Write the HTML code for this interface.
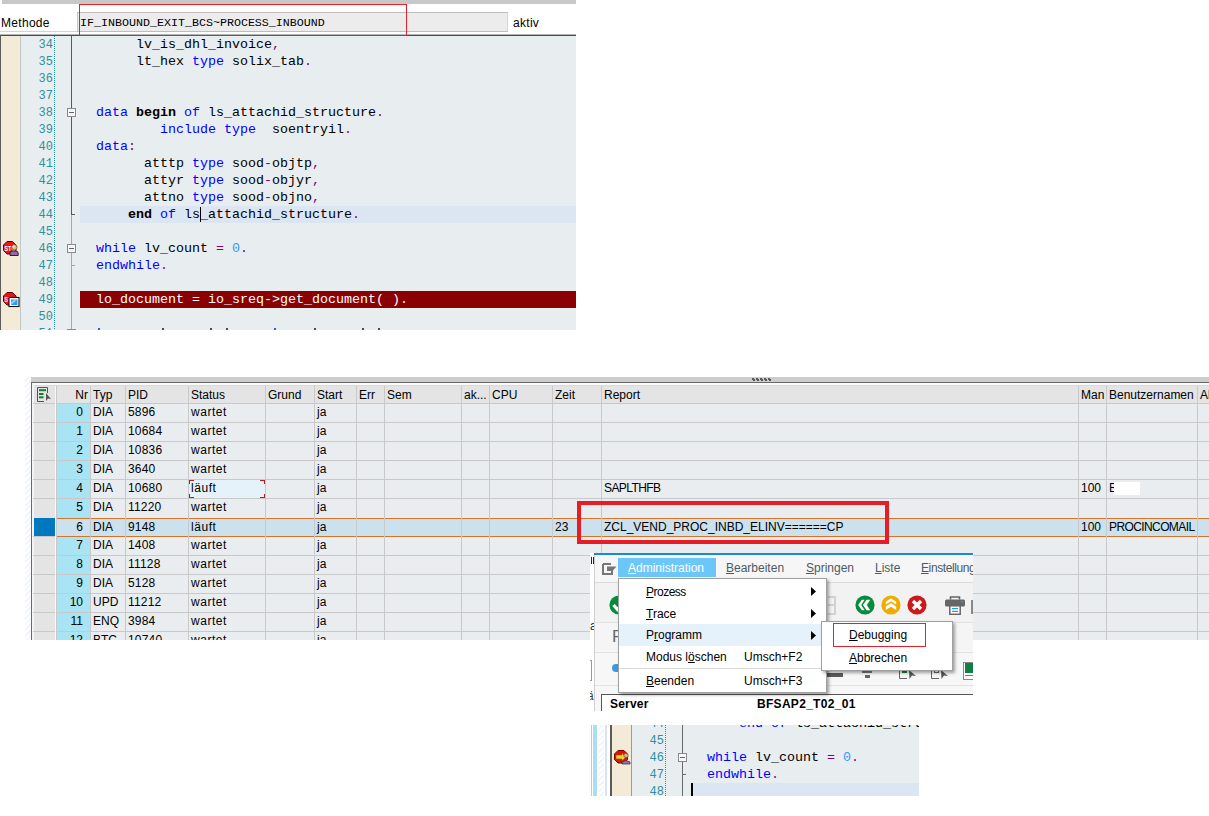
<!DOCTYPE html><html><head><meta charset="utf-8"><title>SAP</title><style>
*{box-sizing:border-box;margin:0;padding:0}
html,body{width:1209px;height:816px;background:#fff;overflow:hidden}
body{position:relative;font-family:"Liberation Sans",sans-serif;}
.abs{position:absolute}
.mono{font-family:"Liberation Mono",monospace}
/* editor 1 */
#ed1{position:absolute;left:0;top:0;width:576px;height:330px;overflow:hidden;background:#fff}
.cl{position:absolute;left:80px;height:17px;line-height:18px;font-family:"Liberation Mono",monospace;font-size:13.33px;white-space:pre;color:#000;}
.ln{position:absolute;height:17px;line-height:19px;font-family:"Liberation Mono",monospace;font-size:12px;color:#2f8f9f;text-align:right;white-space:pre}
.k{color:#0000ff}.p{color:#800080}.n{color:#3399ff}.b{font-weight:bold}
/* table */
#tb{position:absolute;left:25px;top:377px;width:1184px;height:263px;overflow:hidden;background:#e9edf0}
.lc{letter-spacing:.55px}.uc{letter-spacing:-.6px}.dg{letter-spacing:.2px}
.t{position:absolute;font-size:12px;line-height:17px;height:18px;white-space:pre;color:#000}
.hl{position:absolute;left:8px;right:0;height:1px;background:#c9c9c9}
.vl{position:absolute;top:9px;bottom:0;width:1px;background:#c9c9c9}
/* popup */
#pp{position:absolute;left:590px;top:553px;width:383px;height:158px;overflow:hidden;background:#f2f2f2}
.mi{position:absolute;font-size:12px;line-height:22px;height:22px;white-space:pre;color:#000}
.mb{position:absolute;font-size:12px;line-height:21px;height:21px;white-space:pre;color:#4c5a68}
u{text-decoration:underline;text-underline-offset:1px}
/* editor 3 */
#ed3{position:absolute;left:591px;top:725px;width:328px;height:71px;overflow:hidden;background:#e8eef0}
</style></head><body>
<div id="ed1">
<div class="abs" style="left:2px;top:0;width:574px;height:4px;background:#c8c8c8"></div>
<div class="abs" style="left:0;top:31px;width:78px;height:1px;background:#d4d4d4"></div>
<div class="abs" style="left:0;top:36px;width:576px;height:294px;background:#e8eef0"></div>
<div class="abs" style="left:0;top:34px;width:576px;height:1px;background:#b4b4b4"></div><div class="abs" style="left:0;top:35px;width:576px;height:1px;background:#4c4c4c"></div>
<div class="abs" style="left:0;top:35px;width:1px;height:295px;background:#5a5a5a"></div>
<div class="abs" style="left:1px;top:36px;width:19px;height:294px;background:#f3ead8"></div>
<div class="abs" style="left:20px;top:36px;width:1px;height:294px;background:#c4c9cc"></div>
<div class="abs" style="left:1px;top:13px;font-size:12px;line-height:20px;color:#000;letter-spacing:.3px">Methode</div>
<div class="abs" style="left:77px;top:12px;width:431px;height:20px;background:#ececec;border:1px solid #bdbdbd;border-left-color:#c8c8c8;border-right-color:#d4d4d4"></div>
<div class="abs mono" style="left:80px;top:13px;font-size:11.67px;line-height:20px;white-space:pre;color:#000">IF_INBOUND_EXIT_BCS~PROCESS_INBOUND</div>
<div class="abs" style="left:513px;top:13px;font-size:12px;line-height:20px;color:#000;letter-spacing:.3px">aktiv</div>
<div class="abs" style="left:79px;top:4px;width:328px;height:32px;border:1px solid #e8202c"></div>
<div class="abs" style="left:54px;top:36px;width:1px;height:294px;background:repeating-linear-gradient(to bottom,#2f8f9f 0 1px,transparent 1px 2px)"></div>
<div class="abs" style="left:71px;top:36px;width:1px;height:178px;background:#5a5a5a"></div>
<div class="abs" style="left:71px;top:214px;width:1px;height:116px;background:#a8a8a8"></div>
<div class="abs" style="left:80px;top:206px;width:496px;height:17px;background:#dce6f3"></div>
<div class="abs" style="left:80px;top:291px;width:496px;height:17px;background:#8b0000"></div>
<div class="ln" style="left:20px;width:33px;top:36px">34</div>
<div class="cl" style="top:36px">       lv_is_dhl_invoice<span class="p">,</span></div>
<div class="ln" style="left:20px;width:33px;top:53px">35</div>
<div class="cl" style="top:53px">       lt_hex <span class="k">type</span> solix_tab<span class="p">.</span></div>
<div class="ln" style="left:20px;width:33px;top:70px">36</div>
<div class="ln" style="left:20px;width:33px;top:87px">37</div>
<div class="ln" style="left:20px;width:33px;top:104px">38</div>
<div class="cl" style="top:104px">  <span class="k">data</span> <span class="b">begin</span> <span class="k">of</span> ls_attachid_structure<span class="p">.</span></div>
<div class="ln" style="left:20px;width:33px;top:121px">39</div>
<div class="cl" style="top:121px">          <span class="k">include type</span>  soentryil<span class="p">.</span></div>
<div class="ln" style="left:20px;width:33px;top:138px">40</div>
<div class="cl" style="top:138px">  <span class="k">data</span><span class="p">:</span></div>
<div class="ln" style="left:20px;width:33px;top:155px">41</div>
<div class="cl" style="top:155px">        atttp <span class="k">type</span> sood<span class="p">-</span>objtp<span class="p">,</span></div>
<div class="ln" style="left:20px;width:33px;top:172px">42</div>
<div class="cl" style="top:172px">        attyr <span class="k">type</span> sood<span class="p">-</span>objyr<span class="p">,</span></div>
<div class="ln" style="left:20px;width:33px;top:189px">43</div>
<div class="cl" style="top:189px">        attno <span class="k">type</span> sood<span class="p">-</span>objno<span class="p">,</span></div>
<div class="ln" style="left:20px;width:33px;top:206px">44</div>
<div class="cl" style="top:206px">      <span class="b">end</span> <span class="k">of</span> ls_attachid_structure<span class="p">.</span></div>
<div class="ln" style="left:20px;width:33px;top:223px">45</div>
<div class="ln" style="left:20px;width:33px;top:240px">46</div>
<div class="cl" style="top:240px">  <span class="k">while</span> lv_count <span class="p">=</span> <span class="n">0</span><span class="p">.</span></div>
<div class="ln" style="left:20px;width:33px;top:257px">47</div>
<div class="cl" style="top:257px">  <span class="k">endwhile</span><span class="p">.</span></div>
<div class="ln" style="left:20px;width:33px;top:274px">48</div>
<div class="ln" style="left:20px;width:33px;top:291px">49</div>
<div class="cl" style="top:291px"><span style="color:#fff">  lo_document = io_sreq-&gt;get_document( ).</span></div>
<div class="ln" style="left:20px;width:33px;top:308px">50</div>
<div class="ln" style="left:20px;width:33px;top:325px">51</div>
<div class="abs" style="left:98px;top:328px;width:2px;height:2px;background:#2020ff;opacity:.8"></div>
<div class="abs" style="left:162px;top:328px;width:2px;height:2px;background:#222;opacity:.8"></div>
<div class="abs" style="left:210px;top:328px;width:2px;height:2px;background:#222;opacity:.8"></div>
<div class="abs" style="left:226px;top:328px;width:2px;height:2px;background:#222;opacity:.8"></div>
<div class="abs" style="left:274px;top:328px;width:2px;height:2px;background:#2020ff;opacity:.8"></div>
<div class="abs" style="left:314px;top:328px;width:2px;height:2px;background:#222;opacity:.8"></div>
<div class="abs" style="left:362px;top:328px;width:2px;height:2px;background:#222;opacity:.8"></div>
<div class="abs" style="left:378px;top:328px;width:2px;height:2px;background:#222;opacity:.8"></div>
<div class="abs" style="left:67px;top:108px;width:9px;height:9px;background:#f4f6f7;border:1px solid #8a8a8a"></div><div class="abs" style="left:69px;top:112px;width:5px;height:1px;background:#666"></div>
<div class="abs" style="left:67px;top:244px;width:9px;height:9px;background:#f4f6f7;border:1px solid #8a8a8a"></div><div class="abs" style="left:69px;top:248px;width:5px;height:1px;background:#666"></div>
<div class="abs" style="left:67px;top:329px;width:9px;height:9px;background:#f4f6f7;border:1px solid #8a8a8a"></div><div class="abs" style="left:69px;top:333px;width:5px;height:1px;background:#666"></div>
<div class="abs" style="left:71px;top:214px;width:4px;height:1px;background:#5a5a5a"></div>
<div class="abs" style="left:71px;top:265px;width:4px;height:1px;background:#a8a8a8"></div>
<div class="abs" style="left:200px;top:207px;width:1px;height:15px;background:#000"></div>
<svg class="abs" style="left:3px;top:241px" width="17" height="15" viewBox="0 0 17 15"><polygon points="4,0.5 9.5,0.5 13,4 13,9.5 9.5,13 4,13 0.5,9.5 0.5,4" fill="#e8141c" stroke="#600000" stroke-width="1"/><text x="1.3" y="9.7" font-family="Liberation Sans" font-size="7.5" font-weight="bold" fill="#fff" textLength="11.5" lengthAdjust="spacingAndGlyphs">STO</text><path d="M7,14.5 V12.3 Q7,10.2 9.2,10 H13 Q15.2,10.2 15.2,12.3 V14.5 Z" fill="#9468a8" stroke="#1a1020" stroke-width=".9"/><circle cx="11.3" cy="6.3" r="2.7" fill="#e4b888" stroke="#6a4020" stroke-width=".7"/><circle cx="10.6" cy="5.5" r="1" fill="#fff0dc"/></svg>
<svg class="abs" style="left:3px;top:292px" width="18" height="16" viewBox="0 0 18 16"><polygon points="4,0.5 9.5,0.5 13,4 13,9.5 9.5,13 4,13 0.5,9.5 0.5,4" fill="#e8141c" stroke="#600000" stroke-width="1"/><text x="1.3" y="9.7" font-family="Liberation Sans" font-size="7.5" font-weight="bold" fill="#fff" textLength="11.5" lengthAdjust="spacingAndGlyphs">STO</text><rect x="6" y="5.5" width="10" height="9" fill="#fff" stroke="#101018" stroke-width="1.1"/><rect x="8" y="7.5" width="6.5" height="5.5" fill="#2c9ce4"/><path d="M8,13 L14.5,7.5 H11 L8,10.5 Z" fill="#8cd0f8"/></svg>
</div>
<div id="tb">
<div class="abs" style="left:0;top:0;width:6px;height:263px;background:repeating-linear-gradient(135deg,#fff 0 2px,#f2f6fa 2px 4px)"></div>
<div class="abs" style="left:6px;top:0;width:1178px;height:5px;background:#cdcdcd"></div>
<div class="abs" style="left:6px;top:5px;width:1178px;height:1px;background:#6a6a6a"></div>
<div class="abs" style="left:6px;top:6px;width:1178px;height:2px;background:#fafafa"></div>
<div class="abs" style="left:6px;top:8px;width:1178px;height:1px;background:#dadada"></div>
<div class="abs" style="left:6px;top:5px;width:1px;height:258px;background:#6a6a6a"></div>
<div class="abs" style="left:7px;top:6px;width:2px;height:257px;background:#f4f4f4"></div>
<div class="abs" style="left:9px;top:9px;width:1175px;height:17px;background:#e4e4e4"></div>
<div class="abs" style="left:727px;top:1px;width:19px;height:2px;background:repeating-linear-gradient(90deg,#5a5a5a 0 2px,transparent 2px 4px)"></div>
<div class="abs" style="left:728px;top:2px;width:19px;height:2px;background:repeating-linear-gradient(90deg,#5a5a5a 0 2px,transparent 2px 4px)"></div>
<div class="abs" style="left:9px;top:27px;width:21px;height:236px;background:#e4e4e4"></div>
<div class="abs" style="left:32px;top:27px;width:33px;height:236px;background:#a8e4f4"></div>
<div class="abs" style="left:32px;top:141px;width:1152px;height:18px;background:#cbe2ee"></div>
<div class="abs" style="left:9px;top:141px;width:21px;height:18px;background:#0078c0"></div>
<div class="hl" style="top:26px"></div>
<div class="hl" style="top:45px"></div>
<div class="hl" style="top:64px"></div>
<div class="hl" style="top:83px"></div>
<div class="hl" style="top:102px"></div>
<div class="hl" style="top:121px"></div>
<div class="hl" style="top:159px"></div>
<div class="hl" style="top:178px"></div>
<div class="hl" style="top:197px"></div>
<div class="hl" style="top:216px"></div>
<div class="hl" style="top:235px"></div>
<div class="hl" style="top:254px"></div>
<div class="hl" style="top:273px"></div>
<div class="abs" style="left:32px;top:141px;width:1152px;height:1px;background:#d87428"></div>
<div class="abs" style="left:32px;top:159px;width:1152px;height:1px;background:#d87428"></div>
<div class="vl" style="left:31px"></div>
<div class="vl" style="left:65px"></div>
<div class="vl" style="left:100px"></div>
<div class="vl" style="left:163px"></div>
<div class="vl" style="left:240px"></div>
<div class="vl" style="left:289px"></div>
<div class="vl" style="left:331px"></div>
<div class="vl" style="left:359px"></div>
<div class="vl" style="left:436px"></div>
<div class="vl" style="left:464px"></div>
<div class="vl" style="left:527px"></div>
<div class="vl" style="left:576px"></div>
<div class="vl" style="left:1053px"></div>
<div class="vl" style="left:1081px"></div>
<div class="vl" style="left:1172px"></div>
<div class="abs" style="left:30px;top:9px;width:1px;height:254px;background:#f8f8f8"></div>
<div class="t" style="left:31px;width:32px;text-align:right;top:10px">Nr</div>
<div class="t" style="left:68px;top:10px">Typ</div>
<div class="t" style="left:103px;top:10px">PID</div>
<div class="t" style="left:166px;top:10px">Status</div>
<div class="t" style="left:243px;top:10px">Grund</div>
<div class="t" style="left:292px;top:10px">Start</div>
<div class="t" style="left:334px;top:10px">Err</div>
<div class="t" style="left:362px;top:10px">Sem</div>
<div class="t" style="left:439px;top:10px">ak...</div>
<div class="t" style="left:467px;top:10px">CPU</div>
<div class="t" style="left:530px;top:10px">Zeit</div>
<div class="t" style="left:579px;top:10px">Report</div>
<div class="t" style="left:1056px;top:10px">Man</div>
<div class="t" style="left:1084px;top:10px">Benutzernamen</div>
<div class="t" style="left:1175px;top:10px">Al</div>
<div class="abs" style="left:164px;top:103px;width:76px;height:18px;background:#e6f2fa"></div>
<div class="t" style="left:31px;width:27px;text-align:right;top:27px">0</div>
<div class="t" style="left:68px;top:27px">DIA</div>
<div class="t dg" style="left:103px;top:27px">5896</div>
<div class="t lc" style="left:166px;top:27px">wartet</div>
<div class="t" style="left:292px;top:27px">ja</div>
<div class="t" style="left:31px;width:27px;text-align:right;top:46px">1</div>
<div class="t" style="left:68px;top:46px">DIA</div>
<div class="t dg" style="left:103px;top:46px">10684</div>
<div class="t lc" style="left:166px;top:46px">wartet</div>
<div class="t" style="left:292px;top:46px">ja</div>
<div class="t" style="left:31px;width:27px;text-align:right;top:65px">2</div>
<div class="t" style="left:68px;top:65px">DIA</div>
<div class="t dg" style="left:103px;top:65px">10836</div>
<div class="t lc" style="left:166px;top:65px">wartet</div>
<div class="t" style="left:292px;top:65px">ja</div>
<div class="t" style="left:31px;width:27px;text-align:right;top:84px">3</div>
<div class="t" style="left:68px;top:84px">DIA</div>
<div class="t dg" style="left:103px;top:84px">3640</div>
<div class="t lc" style="left:166px;top:84px">wartet</div>
<div class="t" style="left:292px;top:84px">ja</div>
<div class="t" style="left:31px;width:27px;text-align:right;top:103px">4</div>
<div class="t" style="left:68px;top:103px">DIA</div>
<div class="t dg" style="left:103px;top:103px">10680</div>
<div class="t lc" style="left:166px;top:103px">läuft</div>
<div class="t" style="left:292px;top:103px">ja</div>
<div class="t" style="left:31px;width:27px;text-align:right;top:122px">5</div>
<div class="t" style="left:68px;top:122px">DIA</div>
<div class="t dg" style="left:103px;top:122px">11220</div>
<div class="t lc" style="left:166px;top:122px">wartet</div>
<div class="t" style="left:292px;top:122px">ja</div>
<div class="t" style="left:31px;width:27px;text-align:right;top:142px">6</div>
<div class="t" style="left:68px;top:142px">DIA</div>
<div class="t dg" style="left:103px;top:142px">9148</div>
<div class="t lc" style="left:166px;top:142px">läuft</div>
<div class="t" style="left:292px;top:142px">ja</div>
<div class="t" style="left:31px;width:27px;text-align:right;top:160px">7</div>
<div class="t" style="left:68px;top:160px">DIA</div>
<div class="t dg" style="left:103px;top:160px">1408</div>
<div class="t lc" style="left:166px;top:160px">wartet</div>
<div class="t" style="left:292px;top:160px">ja</div>
<div class="t" style="left:31px;width:27px;text-align:right;top:179px">8</div>
<div class="t" style="left:68px;top:179px">DIA</div>
<div class="t dg" style="left:103px;top:179px">11128</div>
<div class="t lc" style="left:166px;top:179px">wartet</div>
<div class="t" style="left:292px;top:179px">ja</div>
<div class="t" style="left:31px;width:27px;text-align:right;top:198px">9</div>
<div class="t" style="left:68px;top:198px">DIA</div>
<div class="t dg" style="left:103px;top:198px">5128</div>
<div class="t lc" style="left:166px;top:198px">wartet</div>
<div class="t" style="left:292px;top:198px">ja</div>
<div class="t" style="left:31px;width:27px;text-align:right;top:217px">10</div>
<div class="t" style="left:68px;top:217px">UPD</div>
<div class="t dg" style="left:103px;top:217px">11212</div>
<div class="t lc" style="left:166px;top:217px">wartet</div>
<div class="t" style="left:292px;top:217px">ja</div>
<div class="t" style="left:31px;width:27px;text-align:right;top:236px">11</div>
<div class="t" style="left:68px;top:236px">ENQ</div>
<div class="t dg" style="left:103px;top:236px">3984</div>
<div class="t lc" style="left:166px;top:236px">wartet</div>
<div class="t" style="left:292px;top:236px">ja</div>
<div class="t" style="left:31px;width:27px;text-align:right;top:255px">12</div>
<div class="t" style="left:68px;top:255px">BTC</div>
<div class="t dg" style="left:103px;top:255px">10740</div>
<div class="t lc" style="left:166px;top:255px">wartet</div>
<div class="t" style="left:292px;top:255px">ja</div>
<div class="t uc" style="left:579px;top:103px">SAPLTHFB</div>
<div class="t" style="left:1056px;top:103px">100</div>
<div class="t" style="left:1084px;top:103px">B</div>
<div class="abs" style="left:1089px;top:105px;width:26px;height:13px;background:#fff"></div>
<div class="t" style="left:579px;top:142px">ZCL_VEND_PROC_INBD_ELINV======CP</div>
<div class="t" style="left:530px;top:142px">23</div>
<div class="t" style="left:1056px;top:142px">100</div>
<div class="t uc" style="left:1084px;top:142px">PROCINCOMAIL</div>
<div class="abs" style="left:164px;top:103px;width:5px;height:1px;background:#b02020"></div>
<div class="abs" style="left:164px;top:103px;width:1px;height:4px;background:#b02020"></div>
<div class="abs" style="left:164px;top:120px;width:5px;height:1px;background:#b02020"></div>
<div class="abs" style="left:164px;top:117px;width:1px;height:4px;background:#b02020"></div>
<div class="abs" style="left:235px;top:103px;width:5px;height:1px;background:#b02020"></div>
<div class="abs" style="left:239px;top:103px;width:1px;height:4px;background:#b02020"></div>
<div class="abs" style="left:235px;top:120px;width:5px;height:1px;background:#b02020"></div>
<div class="abs" style="left:239px;top:117px;width:1px;height:4px;background:#b02020"></div>
<svg class="abs" style="left:12px;top:10px" width="16" height="15" viewBox="0 0 16 15"><path d="M0.5,0.5 H10.5 V6 M0.5,0.5 V14.5 H7" fill="none" stroke="#5a4a6a" stroke-width="1"/><rect x="2" y="2.2" width="7" height="2" fill="#108030"/><rect x="2" y="6" width="4.5" height="2" fill="#108030"/><rect x="2" y="9.3" width="4.5" height="2" fill="#108030"/><path d="M9,6 L14,12 L11,11.5 L9,14 Z" fill="#555"/></svg>
</div>
<div class="abs" style="left:577px;top:501px;width:312px;height:43px;border:4px solid #e81c24"></div>
<div id="pp">
<div class="abs" style="left:0px;top:0px;width:4px;height:158px;background:#fff;"></div>
<div class="abs" style="left:1px;top:4px;width:1px;height:7px;background:#223;"></div>
<div class="abs" style="left:3px;top:4px;width:1px;height:7px;background:#223;"></div>
<div class="abs" style="left:0px;top:66px;font-size:12px;line-height:14px;color:#222">a</div>
<div class="abs" style="left:0px;top:107px;width:2px;height:21px;background:#fff;border:1px solid #9a9a9a;border-left:none"></div>
<div class="abs" style="left:-3px;top:136px;font-size:12px;line-height:14px;color:#444">ä</div>
<div class="abs" style="left:4px;top:0px;width:379px;height:2px;background:#1a8ad4;"></div>
<div class="abs" style="left:4px;top:2px;width:379px;height:27px;background:#f6f6f6;"></div>
<div class="abs" style="left:4px;top:29px;width:379px;height:1px;background:#dadada;"></div>
<div class="abs" style="left:4px;top:30px;width:379px;height:39px;background:#f2f2f2;"></div>
<div class="abs" style="left:4px;top:69px;width:379px;height:1px;background:#e2e2e2;"></div>
<div class="abs" style="left:4px;top:70px;width:379px;height:29px;background:#f5f5f5;"></div>
<div class="abs" style="left:4px;top:99px;width:379px;height:1px;background:#e2e2e2;"></div>
<div class="abs" style="left:4px;top:100px;width:379px;height:32px;background:#f7f7f7;"></div>
<div class="abs" style="left:4px;top:132px;width:379px;height:1px;background:#e2e2e2;"></div>
<div class="abs" style="left:4px;top:133px;width:379px;height:25px;background:#f7f7f7;"></div>
<div class="abs" style="left:4px;top:2px;width:1px;height:156px;background:#cfcfcf;"></div>
<div class="abs" style="left:28px;top:5px;width:98px;height:19px;background:#6cc6f8;"></div>
<div class="mb" style="left:38px;top:5px;color:#fff"><u>A</u>dministration</div>
<div class="mb" style="left:136px;top:5px;"><u>B</u>earbeiten</div>
<div class="mb" style="left:216px;top:5px;"><u>S</u>pringen</div>
<div class="mb" style="left:285px;top:5px;"><u>L</u>iste</div>
<div class="mb" style="left:331px;top:5px;letter-spacing:-.4px"><u>E</u>instellungen</div>
<svg class="abs" style="left:12px;top:10px" width="15" height="12" viewBox="0 0 15 12"><path d="M1,1 H9 M1,1 V11 H10 V7" fill="none" stroke="#777" stroke-width="2"/><path d="M5,3.5 H14.5 L10.5,8 H5 Z" fill="#777"/></svg>
<svg class="abs" style="left:18px;top:41px" width="22" height="22" viewBox="0 0 22 22"><circle cx="11" cy="11" r="9.6" fill="#078c3c"/><path d="M5.5,11 L9.5,15.5 L16.5,7" fill="none" stroke="#fff" stroke-width="3.2"/></svg>
<svg class="abs" style="left:264px;top:41px" width="22" height="22" viewBox="0 0 22 22"><circle cx="11" cy="11" r="9.6" fill="#078c3c"/><path d="M10.6,5.8 H7.8 L4.2,11 L7.8,16.2 H10.6 L7.2,11 Z M16.2,5.8 H12.6 L9,11 L12.6,16.2 H16.2 L12.8,11 Z" fill="#fff"/></svg>
<svg class="abs" style="left:290px;top:41px" width="22" height="22" viewBox="0 0 22 22"><circle cx="11" cy="11" r="9.6" fill="#f0ab00"/><path d="M5.8,10.4 V7.8 L11,4.2 L16.2,7.8 V10.4 L11,7.2 Z M5.8,16 V12.6 L11,9 L16.2,12.6 V16 L11,12.8 Z" fill="#fff"/></svg>
<svg class="abs" style="left:316px;top:41px" width="22" height="22" viewBox="0 0 22 22"><circle cx="11" cy="11" r="9.6" fill="#cc1919"/><path d="M7,7 L15,15 M15,7 L7,15" fill="none" stroke="#fff" stroke-width="3.4"/></svg>
<svg class="abs" style="left:355px;top:43px" width="20" height="19" viewBox="0 0 20 19"><path d="M5.5,3.5 V1 H14.5 V3.5" fill="none" stroke="#666" stroke-width="1.6"/><rect x="0" y="3.5" width="20" height="7" rx="1.5" fill="#666"/><rect x="15.5" y="5" width="3" height="1.3" fill="#1c9ce8"/><rect x="4.8" y="9.8" width="10.4" height="8.5" fill="#fff" stroke="#666" stroke-width="1.5"/><rect x="7" y="12" width="6" height="1.2" fill="#1c9ce8"/><rect x="7" y="14.8" width="6" height="1.2" fill="#1c9ce8"/></svg>
<div class="abs" style="left:381px;top:47px;width:2px;height:14px;background:#888;"></div>
<div class="abs" style="left:238px;top:43px;width:8px;height:2px;background:#d2d2d2;"></div>
<div class="abs" style="left:244px;top:43px;width:2px;height:19px;background:#d2d2d2;"></div>
<div class="abs" style="left:238px;top:60px;width:8px;height:2px;background:#d2d2d2;"></div>
<div class="abs" style="left:238px;top:51px;width:6px;height:2px;background:#d2d2d2;"></div>
<div class="abs" style="left:22px;top:74px;font-size:17px;line-height:20px;color:#666">P</div>
<div class="abs" style="left:22px;top:111px;width:7px;height:8px;background:#3a9ae0;border-radius:4px 0 0 4px"></div>
<div class="abs" style="left:237px;top:120px;width:16px;height:4px;background:#5a5a5a;"></div>
<div class="abs" style="left:272px;top:118px;width:10px;height:2px;background:#777;"></div>
<div class="abs" style="left:275px;top:122px;width:5px;height:3px;background:#666;"></div>
<svg class="abs" style="left:309px;top:117px" width="20" height="10" viewBox="0 0 20 10"><path d="M0.5,0 V8.5 H8" fill="none" stroke="#666" stroke-width="1"/><rect x="3" y="0" width="5" height="3" fill="#108040"/><path d="M10,0 L17,6 L13,5.5 L10.5,9 Z" fill="#555"/></svg>
<svg class="abs" style="left:341px;top:117px" width="20" height="10" viewBox="0 0 20 10"><path d="M0.5,0 V8.5 H8" fill="none" stroke="#666" stroke-width="1"/><rect x="3" y="0" width="5" height="3" fill="#f7f7f7"/><path d="M10,0 L17,6 L13,5.5 L10.5,9 Z" fill="#555"/></svg>
<div class="abs" style="left:344px;top:117px;width:5px;height:3px;background:#f7f7f7;border:1px solid #666;border-top:none"></div>
<div class="abs" style="left:373px;top:109px;width:10px;height:18px;background:#fff;border:1px solid #888;border-right:none"></div>
<div class="abs" style="left:375px;top:110px;width:8px;height:10px;background:#108040;"></div>
<div class="abs" style="left:375px;top:122px;width:8px;height:1px;background:#40a060;"></div>
<div class="abs" style="left:11px;top:141px;width:372px;height:17px;background:#fff;border-top:1px solid #555;border-left:1px solid #555"></div>
<div class="abs" style="left:20px;top:143px;font-size:12px;line-height:17px;font-weight:bold;color:#000;letter-spacing:.2px">Server</div>
<div class="abs" style="left:167px;top:143px;font-size:12px;line-height:17px;font-weight:bold;color:#000;letter-spacing:.3px">BFSAP2_T02_01</div>
<div class="abs" style="left:28px;top:25px;width:209px;height:115px;background:#fff;border:1px solid #a0a0a0;box-shadow:2px 2px 3px rgba(0,0,0,.35)"></div>
<div class="abs" style="left:29px;top:71px;width:207px;height:22px;background:#e5f1fb;"></div>
<div class="abs" style="left:29px;top:115px;width:207px;height:1px;background:#d8d8d8;"></div>
<div class="mi" style="left:56px;top:28px;letter-spacing:-.5px"><u>P</u>rozess</div>
<div class="mi" style="left:56px;top:50px;"><u>T</u>race</div>
<div class="mi" style="left:56px;top:71px;">P<u>r</u>ogramm</div>
<div class="mi" style="left:56px;top:93px;">Modus l<u>ö</u>schen</div>
<div class="mi" style="left:154px;top:93px;">Umsch+F2</div>
<div class="mi" style="left:56px;top:117px;"><u>B</u>eenden</div>
<div class="mi" style="left:154px;top:117px;">Umsch+F3</div>
<svg class="abs" style="left:221px;top:34px" width="6" height="9" viewBox="0 0 6 9"><path d="M0,0 L5,4.5 L0,9 Z" fill="#000"/></svg>
<svg class="abs" style="left:221px;top:56px" width="6" height="9" viewBox="0 0 6 9"><path d="M0,0 L5,4.5 L0,9 Z" fill="#000"/></svg>
<svg class="abs" style="left:221px;top:78px" width="6" height="9" viewBox="0 0 6 9"><path d="M0,0 L5,4.5 L0,9 Z" fill="#000"/></svg>
<div class="abs" style="left:231px;top:68px;width:132px;height:50px;background:#fff;border:1px solid #a0a0a0;box-shadow:2px 2px 3px rgba(0,0,0,.35)"></div>
<div class="abs" style="left:243px;top:70px;width:93px;height:24px;background:transparent;border:1px solid #e8202c"></div>
<div class="mi" style="left:259px;top:71px;"><u>D</u>ebugging</div>
<div class="mi" style="left:259px;top:94px;"><u>A</u>bbrechen</div>
</div>
<div id="ed3">
<div class="abs" style="left:0;top:0;width:21px;height:71px;background:#fff"></div>
<div class="abs" style="left:0;top:0;width:1px;height:71px;background:#c8c8c8"></div>
<div class="abs" style="left:2px;top:0;width:4px;height:71px;background:#a8e0f2"></div>
<div class="abs" style="left:8px;top:0;width:5px;height:71px;background:repeating-linear-gradient(135deg,#fff 0 2px,#f0f5fa 2px 4px)"></div>
<div class="abs" style="left:14px;top:0;width:2px;height:71px;background:#d6e4f4"></div>
<div class="abs" style="left:19px;top:0;width:2px;height:71px;background:#5a5a5a"></div>
<div class="abs" style="left:21px;top:0;width:19px;height:71px;background:#f3ead8"></div>
<div class="abs" style="left:40px;top:0;width:1px;height:71px;background:#9a9a9a"></div>
<div class="abs" style="left:74px;top:0;width:1px;height:71px;background:repeating-linear-gradient(to bottom,#2f8f9f 0 1px,transparent 1px 2px)"></div>
<div class="abs" style="left:91px;top:0;width:1px;height:71px;background:#6a6a6a"></div>
<div class="abs" style="left:101px;top:58px;width:227px;height:17px;background:#dce6f3"></div>
<div class="abs" style="left:100px;top:58px;width:2px;height:17px;background:#000"></div>
<div class="ln" style="left:41px;width:32px;top:-10px">44</div>
<div class="cl" style="left:100px;top:-10px">      <span class="k">end</span> <span class="k">of</span> ls_attachid_structure<span class="p">.</span></div>
<div class="ln" style="left:41px;width:32px;top:7px">45</div>
<div class="ln" style="left:41px;width:32px;top:24px">46</div>
<div class="cl" style="left:100px;top:24px">  <span class="k">while</span> lv_count <span class="p">=</span> <span class="n">0</span><span class="p">.</span></div>
<div class="ln" style="left:41px;width:32px;top:41px">47</div>
<div class="cl" style="left:100px;top:41px">  <span class="k">endwhile</span><span class="p">.</span></div>
<div class="ln" style="left:41px;width:32px;top:58px">48</div>
<div class="abs" style="left:87px;top:28px;width:9px;height:9px;background:#f4f6f7;border:1px solid #8a8a8a"></div><div class="abs" style="left:89px;top:32px;width:5px;height:1px;background:#666"></div>
<div class="abs" style="left:91px;top:49px;width:4px;height:1px;background:#6a6a6a"></div>
<svg class="abs" style="left:23px;top:25px" width="17" height="15" viewBox="0 0 17 15"><polygon points="4,0.5 10,0.5 13.5,4 13.5,9.5 10,13 4,13 0.5,9.5 0.5,4" fill="#e01010" stroke="#7a0000" stroke-width="1"/><path d="M2,5 H8 V3 L12,7 L8,11 V9 H2 Z" fill="#f8d020" stroke="#805000" stroke-width=".6"/><circle cx="12" cy="5.5" r="2.2" fill="#e0b080" stroke="#704020" stroke-width=".6"/><path d="M8,14 L8,12 Q12,9 16,12 L16,14 Z" fill="#9a70b0" stroke="#302040" stroke-width=".7"/></svg>
</div>
</body></html>
